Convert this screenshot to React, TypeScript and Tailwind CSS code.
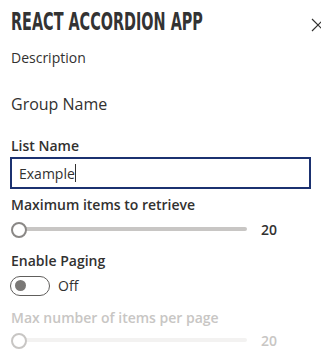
import React from "react";

const body = { fontFamily: '"Open Sans", "Noto Sans", sans-serif' };

function Slider({ disabled }: { disabled?: boolean }) {
  return (
    <div className="flex items-center h-[22px]">
      <div className="relative w-[240px] h-[22px] flex items-center">
        <div className={`ml-[12px] w-[225px] h-[4px] rounded-[2px] ${disabled ? "bg-[#f3f2f1]" : "bg-[#c8c6c4]"}`} />
        <div
          className={`absolute left-[1px] top-[4px] w-[16px] h-[16px] rounded-full bg-white border-2 ${
            disabled ? "border-[#c8c6c4]" : "border-[#8a8886]"
          }`}
        />
      </div>
      <div className={`ml-[11px] text-[14px] font-semibold ${disabled ? "text-[#c8c6c4]" : "text-[#323130]"}`}>20</div>
    </div>
  );
}

export default function App() {
  return (
    <div className="w-[321px] h-[359px] bg-white overflow-hidden px-[10px]" style={body}>
      <div className="flex items-start justify-between pt-[7px]">
        <div
          className="whitespace-nowrap text-[#333333] text-[25px] leading-[30px] font-bold ml-[1px]"
          style={{ fontFamily: '"DejaVu Sans Condensed", "Liberation Sans Narrow", sans-serif', transform: "scaleX(0.64)", transformOrigin: "left" }}
        >
          REACT ACCORDION APP
        </div>
        <svg width="14" height="14" viewBox="0 0 14 14" className="mt-[11px] mr-[2px] shrink-0">
          <path d="M1 1 L13 13 M13 1 L1 13" stroke="#323130" strokeWidth="1.2" fill="none" />
        </svg>
      </div>
      <div className="mt-[11px] ml-[1px] text-[14px] leading-[20px] text-[#323130]">Description</div>
      <div className="mt-[25px] ml-[1px] text-[16px] leading-[22px] text-[#323130]">Group Name</div>
      <div className="mt-[21px] ml-[1px] text-[14px] leading-[20px] font-semibold text-[#323130]">List Name</div>
      <div className="mt-[1px] h-[32px] w-[301px] border-2 border-[#1b3170] flex items-center px-[7px] text-[14px] text-[#323130]">
        <span>Example</span>
        <span className="w-[1px] h-[18px] bg-[#323130]" />
      </div>
      <div className="mt-[6px] ml-[1px] text-[14px] leading-[20px] font-semibold text-[#323130]">Maximum items to retrieve</div>
      <div className="mt-[3px]">
        <Slider />
      </div>
      <div className="mt-[11px] ml-[1px] text-[14px] leading-[20px] font-semibold text-[#323130]">Enable Paging</div>
      <div className="mt-[4px] flex items-center">
        <div className="w-[40px] h-[20px] rounded-full border border-[#605e5c] flex items-center pl-[4px]">
          <div className="w-[11px] h-[11px] rounded-full bg-[#7a7876]" />
        </div>
        <div className="ml-[8px] text-[14px] text-[#323130]">Off</div>
      </div>
      <div className="mt-[12px] ml-[1px] text-[14px] leading-[20px] font-semibold text-[#c8c6c4]">Max number of items per page</div>
      <div className="mt-[1px]">
        <Slider disabled />
      </div>
    </div>
  );
}
